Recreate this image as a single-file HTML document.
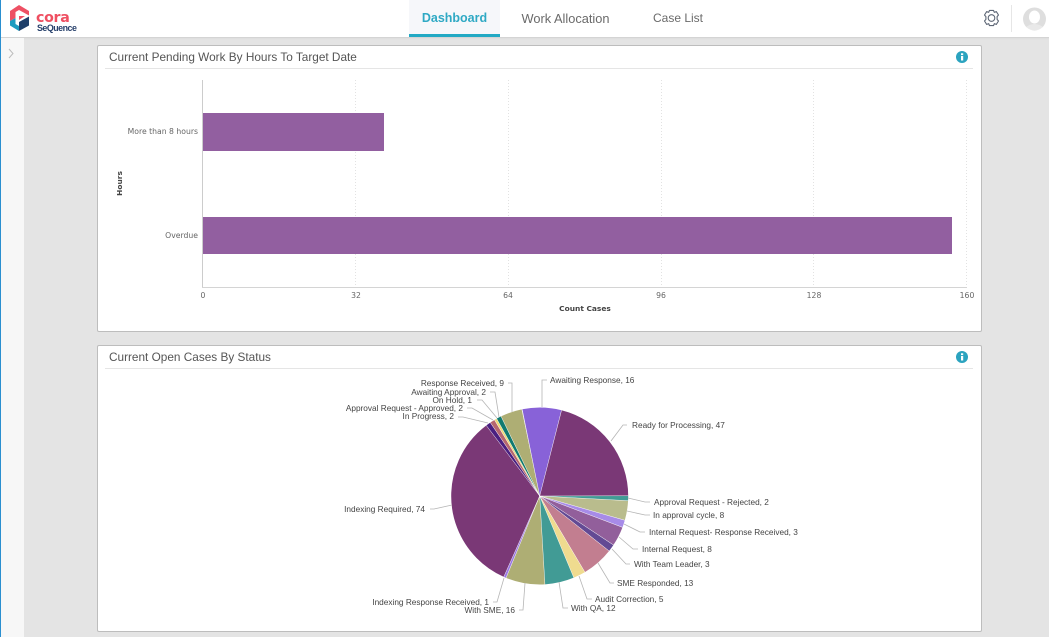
<!DOCTYPE html>
<html><head><meta charset="utf-8"><style>
html,body{margin:0;padding:0;width:1049px;height:637px;overflow:hidden;background:#e4e4e4;font-family:"Liberation Sans",sans-serif}
.a{position:absolute}
#hdr{left:0;top:0;width:1049px;height:37px;background:#fff;border-bottom:1px solid #d4d4d4;box-shadow:0 1px 1px #ddd}
#side{left:0;top:38px;width:24px;height:599px;background:#f7f7f7}
#blue{left:0;top:0;width:1px;height:637px;background:#2a8fd0}
.tab{top:0;height:35px;line-height:37px;font-size:12.8px;color:#6a6a6a;text-align:center;font-family:"Liberation Sans",sans-serif}
.panel{left:97px;width:883px;background:#fff;border:1px solid #bdbdbd;border-radius:2px}
.title{left:109px;font-size:11.8px;color:#555;font-family:"Liberation Sans",sans-serif;white-space:nowrap;line-height:16px}
.ln{left:105px;width:868px;height:1px;background:#e5e5e5}
svg{position:absolute;left:0;top:0}
</style></head><body>
<div class="a" id="hdr"></div>
<div class="a" id="side"></div>
<div class="a" id="blue"></div>
<div class="a" style="left:409px;top:0;width:91px;height:34px;background:#f6f7fa"></div>
<div class="a" style="left:409px;top:34px;width:91px;height:3px;background:#22a9c4"></div>
<div class="a tab" style="left:409px;width:91px;color:#2fa9c4;font-weight:bold;font-size:12.5px">Dashboard</div>
<div class="a tab" style="left:510px;width:111px">Work Allocation</div>
<div class="a tab" style="left:640px;width:76px;font-size:12px">Case List</div>
<div class="a" style="left:36px;top:11px;font:bold 14.2px 'DejaVu Sans',sans-serif;color:#ef4f61;letter-spacing:-.3px;line-height:14px">cora</div>
<div class="a" style="left:37px;top:23px;font:bold 8.9px 'Liberation Sans',sans-serif;color:#27406b;letter-spacing:-.5px;line-height:11px">SeQuence</div>
<div class="a panel" style="top:45px;height:285px"></div>
<div class="a panel" style="top:345px;height:285px"></div>
<div class="a ln" style="top:68px"></div>
<div class="a ln" style="top:368px"></div>
<div class="a title" style="top:49px">Current Pending Work By Hours To Target Date</div>
<div class="a title" style="top:349px">Current Open Cases By Status</div>
<svg width="1049" height="637" viewBox="0 0 1049 637">
<!-- logo -->
<path d="M19 5L29 11V15.5L19 10L15.5 12V18L10 21V11Z" fill="#ee5064"/>
<path d="M10 21L15.5 18V24L19 26V31L10 25.5Z" fill="#1d9cc0"/>
<path d="M19 31V22L29 16.5V25.5Z" fill="#1e3f6a"/>
<path d="M19 16H25L19 20Z" fill="#ee5064"/>
<!-- sidebar chevron -->
<path d="M9 49L13 53.5L9 58" fill="none" stroke="#bdbdbd" stroke-width="1"/>
<!-- gear -->
<g transform="translate(991.5 18)" fill="none" stroke="#5d6675" stroke-width="1.1">
<circle r="3.3"/>
<path d="M-2-7.6H2L2.8-5.7L4.8-6.4L7-3L5.6-1.4V1.4L7 3L4.8 6.4L2.8 5.7L2 7.6H-2L-2.8 5.7L-4.8 6.4L-7 3L-5.6 1.4V-1.4L-7-3L-4.8-6.4L-2.8-5.7Z" stroke-linejoin="round"/>
</g>
<rect x="1011" y="5" width="1" height="27" fill="#e6e6e6"/>
<circle cx="1034.5" cy="19" r="11.5" fill="#dedede"/>
<ellipse cx="1034.5" cy="17" rx="5.5" ry="6.5" fill="#fff"/>
<path d="M1026 27Q1034.5 21 1043 27L1040 30H1029Z" fill="#fff" opacity=".35"/>
<!-- info icons -->
<g>
<circle cx="962" cy="57" r="6" fill="#2ba3bf"/>
<rect x="961" y="56" width="2.2" height="4.5" fill="#fff"/><rect x="961" y="53.3" width="2.2" height="1.8" fill="#fff"/>
<circle cx="962" cy="357" r="6" fill="#2ba3bf"/>
<rect x="961" y="356" width="2.2" height="4.5" fill="#fff"/><rect x="961" y="353.3" width="2.2" height="1.8" fill="#fff"/>
</g>
<!-- bar chart -->
<g stroke="#e2e2e2" stroke-width="1" stroke-dasharray="1 2">
<line x1="355.5" y1="80" x2="355.5" y2="287"/>
<line x1="508.5" y1="80" x2="508.5" y2="287"/>
<line x1="661.5" y1="80" x2="661.5" y2="287"/>
<line x1="813.5" y1="80" x2="813.5" y2="287"/>
<line x1="966.5" y1="80" x2="966.5" y2="287"/>
</g>
<rect x="202" y="80" width="1" height="208" fill="#ccc"/>
<rect x="202" y="287" width="765" height="1" fill="#d4d4d4"/>
<rect x="203" y="113" width="181" height="38" fill="#925fa0"/>
<rect x="203" y="217" width="749" height="37" fill="#925fa0"/>
<g font-family="'DejaVu Sans',sans-serif" font-size="7.7" fill="#666">
<text x="198" y="134" text-anchor="end">More than 8 hours</text>
<text x="198" y="238" text-anchor="end">Overdue</text>
<text x="203" y="298" text-anchor="middle">0</text>
<text x="356" y="298" text-anchor="middle">32</text>
<text x="508" y="298" text-anchor="middle">64</text>
<text x="661" y="298" text-anchor="middle">96</text>
<text x="814" y="298" text-anchor="middle">128</text>
<text x="967" y="298" text-anchor="middle">160</text>
</g>
<text x="585" y="311" text-anchor="middle" font-family="'DejaVu Sans',sans-serif" font-size="7.45" font-weight="bold" fill="#444">Count Cases</text>
<text transform="translate(122 183.500) rotate(-90)" text-anchor="middle" font-family="'DejaVu Sans',sans-serif" font-size="7.45" font-weight="bold" fill="#444">Hours</text>
<!-- pie -->
<g transform="translate(539.7 496)" fill="none" stroke-width="88.5">
<circle r="44.25" pathLength="360" stroke="#7a3876" stroke-dasharray="75.54 360" transform="rotate(-75.7)"/>
<circle r="44.25" pathLength="360" stroke="#419b95" stroke-dasharray="3.21 360" transform="rotate(-0.16)"/>
<circle r="44.25" pathLength="360" stroke="#b9bc8d" stroke-dasharray="12.86 360" transform="rotate(3.05)"/>
<circle r="44.25" pathLength="360" stroke="#a78be8" stroke-dasharray="4.82 360" transform="rotate(15.91)"/>
<circle r="44.25" pathLength="360" stroke="#925f9b" stroke-dasharray="12.86 360" transform="rotate(20.73)"/>
<circle r="44.25" pathLength="360" stroke="#634a94" stroke-dasharray="4.82 360" transform="rotate(33.59)"/>
<circle r="44.25" pathLength="360" stroke="#c27e90" stroke-dasharray="20.89 360" transform="rotate(38.41)"/>
<circle r="44.25" pathLength="360" stroke="#efdb8f" stroke-dasharray="8.04 360" transform="rotate(59.3)"/>
<circle r="44.25" pathLength="360" stroke="#419b95" stroke-dasharray="19.28 360" transform="rotate(67.34)"/>
<circle r="44.25" pathLength="360" stroke="#aeae74" stroke-dasharray="25.72 360" transform="rotate(86.62)"/>
<circle r="44.25" pathLength="360" stroke="#9a77e4" stroke-dasharray="1.6 360" transform="rotate(112.34)"/>
<circle r="44.25" pathLength="360" stroke="#7a3876" stroke-dasharray="118.93 360" transform="rotate(113.94)"/>
<circle r="44.25" pathLength="360" stroke="#4a2080" stroke-dasharray="3.22 360" transform="rotate(232.87)"/>
<circle r="44.25" pathLength="360" stroke="#b5666f" stroke-dasharray="3.21 360" transform="rotate(236.09)"/>
<circle r="44.25" pathLength="360" stroke="#eed976" stroke-dasharray="1.61 360" transform="rotate(239.3)"/>
<circle r="44.25" pathLength="360" stroke="#107a70" stroke-dasharray="3.21 360" transform="rotate(240.91)"/>
<circle r="44.25" pathLength="360" stroke="#aeae74" stroke-dasharray="14.17 360" transform="rotate(244.12)"/>
<circle r="44.25" pathLength="360" stroke="#8862d8" stroke-dasharray="25.72 360" transform="rotate(258.59)"/>
</g>
<g transform="translate(539.7 496)" stroke="#fff" stroke-width=".4">
<line y2="-88.5" transform="rotate(14.3)"/><line y2="-88.5" transform="rotate(89.84)"/><line y2="-88.5" transform="rotate(93.05)"/><line y2="-88.5" transform="rotate(105.91)"/><line y2="-88.5" transform="rotate(110.73)"/><line y2="-88.5" transform="rotate(123.59)"/><line y2="-88.5" transform="rotate(128.41)"/><line y2="-88.5" transform="rotate(149.3)"/><line y2="-88.5" transform="rotate(157.34)"/><line y2="-88.5" transform="rotate(176.62)"/><line y2="-88.5" transform="rotate(202.34)"/><line y2="-88.5" transform="rotate(203.94)"/><line y2="-88.5" transform="rotate(322.87)"/><line y2="-88.5" transform="rotate(326.09)"/><line y2="-88.5" transform="rotate(329.3)"/><line y2="-88.5" transform="rotate(330.91)"/><line y2="-88.5" transform="rotate(334.12)"/><line y2="-88.5" transform="rotate(348.59)"/>
</g>
<!-- leaders -->
<g fill="none" stroke="#b5b5b5" stroke-width=".8">
<polyline points="508,383 512,383 512,412"/>
<polyline points="490,392 495,392 499,417"/>
<polyline points="477,400 482,400 497,418"/>
<polyline points="467,408 472,408 493,420"/>
<polyline points="458,417 463,417 488,423"/>
<polyline points="547,380 542,380 542,407"/>
<polyline points="627,425 623,425 611,441"/>
<polyline points="628,498 645,502 650,502"/>
<polyline points="627,511 645,515 650,515"/>
<polyline points="624,524 640,532 645,532"/>
<polyline points="619,537 633,549 638,549"/>
<polyline points="612,549 626,564 630,564"/>
<polyline points="598,563 610,583 614,583"/>
<polyline points="579,576 587,599 592,599"/>
<polyline points="559,582 563,608 568,608"/>
<polyline points="525,583 523,610 519,610"/>
<polyline points="504,578 497,602 493,602"/>
<polyline points="452,505 434,509 430,509"/>
</g>
<g font-family="'Liberation Sans',sans-serif" font-size="8.27" fill="#444">
<text x="504" y="386" text-anchor="end">Response Received, 9</text>
<text x="486" y="395" text-anchor="end">Awaiting Approval, 2</text>
<text x="472" y="403" text-anchor="end">On Hold, 1</text>
<text x="463" y="411" text-anchor="end">Approval Request - Approved, 2</text>
<text x="454" y="419" text-anchor="end">In Progress, 2</text>
<text x="550" y="383">Awaiting Response, 16</text>
<text x="632" y="428">Ready for Processing, 47</text>
<text x="654" y="505">Approval Request - Rejected, 2</text>
<text x="653" y="518">In approval cycle, 8</text>
<text x="649" y="535">Internal Request- Response Received, 3</text>
<text x="642" y="552">Internal Request, 8</text>
<text x="634" y="567">With Team Leader, 3</text>
<text x="617" y="586">SME Responded, 13</text>
<text x="595" y="602">Audit Correction, 5</text>
<text x="571" y="611">With QA, 12</text>
<text x="515" y="613" text-anchor="end">With SME, 16</text>
<text x="489" y="605" text-anchor="end">Indexing Response Received, 1</text>
<text x="425" y="512" text-anchor="end">Indexing Required, 74</text>
</g>
</svg>
</body></html>
